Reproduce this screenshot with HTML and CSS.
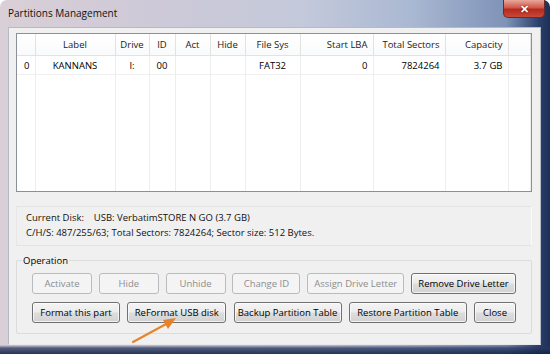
FILE: index.html
```html
<!DOCTYPE html>
<html>
<head>
<meta charset="utf-8">
<link rel="stylesheet" href="styles.css">
</head>
<body>
<div class="window">
  <div class="titlebar">
    <span class="title">Partitions Management</span>
    <span class="closebtn">✕</span>
  </div>
  <div class="frame">
    <div class="client">
      <div class="listview">
        <table class="grid">
          <colgroup>
            <col style="width:18px"><col style="width:80px"><col style="width:34px"><col style="width:26px"><col style="width:35px"><col style="width:35px"><col style="width:55px"><col style="width:73px"><col style="width:72px"><col style="width:63px"><col>
          </colgroup>
          <tr class="head">
            <th></th><th>Label</th><th>Drive</th><th>ID</th><th>Act</th><th>Hide</th><th>File Sys</th><th class="r">Start LBA</th><th class="r">Total Sectors</th><th class="r">Capacity</th><th></th>
          </tr>
          <tr class="row">
            <td class="l">0</td><td>KANNANS</td><td>I:</td><td>00</td><td></td><td></td><td>FAT32</td><td class="r">0</td><td class="r">7824264</td><td class="r">3.7 GB</td><td></td>
          </tr>
          <tr class="fill">
            <td></td><td></td><td></td><td></td><td></td><td></td><td></td><td></td><td></td><td></td><td></td>
          </tr>
        </table>
      </div>
      <div class="info">
        <div>Current Disk:&nbsp;&nbsp;&nbsp; USB: VerbatimSTORE N GO (3.7 GB)</div>
        <div>C/H/S: 487/255/63; Total Sectors: 7824264; Sector size: 512 Bytes.</div>
      </div>
      <div class="group">
        <div class="legend">Operation</div>
        <div class="btnrow">
          <button class="btn dis w60">Activate</button>
          <button class="btn dis w60">Hide</button>
          <button class="btn dis w60">Unhide</button>
          <button class="btn dis w68">Change ID</button>
          <button class="btn dis w97">Assign Drive Letter</button>
          <button class="btn w105">Remove Drive Letter</button>
        </div>
        <div class="btnrow">
          <button class="btn w88">Format this part</button>
          <button class="btn w99">ReFormat USB disk</button>
          <button class="btn w108">Backup Partition Table</button>
          <button class="btn w118">Restore Partition Table</button>
          <button class="btn w42">Close</button>
        </div>
      </div>
    </div>
  </div>
  <svg class="arrow" width="60" height="40" viewBox="0 0 60 40">
    <line x1="3" y1="32" x2="38" y2="13" stroke="#e8822a" stroke-width="2" stroke-linecap="round"/>
    <polygon points="46,8 33,10 38,19" fill="#e8822a"/>
  </svg>
</div>
</body>
</html>
```
FILE: styles.css
```css
html, body {
  margin: 0;
  padding: 0;
  width: 550px;
  height: 354px;
  overflow: hidden;
  background: #ffffff;
}
.window {
  position: relative;
  width: 550px;
  height: 354px;
  display: flex;
  flex-direction: column;
  box-sizing: border-box;
  border-radius: 7px 7px 0 0;
  background:
    linear-gradient(to bottom, rgba(0,0,0,0) 345px, rgba(40,55,95,0.75) 348px, rgba(20,35,70,0.9) 354px),
    linear-gradient(to right, #d9cfd6 0%, #cdc9d8 30%, #c4c9db 55%, #a9b8d2 75%, #7f93b8 92%, #2a406b 98%, #1c2f55 100%);
  font-family: "Open Sans", "Liberation Sans", sans-serif;
  font-size: 9.5px;
  color: #000;
}
.titlebar {
  height: 27px;
  flex: none;
  display: flex;
  align-items: flex-start;
  justify-content: space-between;
  box-sizing: border-box;
  padding-left: 8px;
  padding-right: 5px;
}
.title {
  font-size: 10px;
  line-height: 14px;
  margin-top: 6px;
  color: #111;
}
.closebtn {
  width: 42px;
  height: 18px;
  box-sizing: border-box;
  border: 1px solid #6b2a2a;
  border-top: none;
  border-radius: 0 0 5px 5px;
  background: linear-gradient(to bottom, #e8a89a 0%, #d0584a 45%, #b52a1c 55%, #c8483a 100%);
  color: #fff;
  font-size: 11px;
  font-weight: bold;
  line-height: 17px;
  text-align: center;
  text-shadow: 0 0 2px #600;
}
.frame {
  flex: 1;
  display: flex;
  padding: 0 9px 9px 8px;
}
.client {
  flex: 1;
  background: #f0f0f0;
  border: 1px solid #b6b9c6;
  border-bottom-color: #e8e8e8;
  display: flex;
  flex-direction: column;
  padding: 5px 8px 0 7px;
}
.listview {
  height: 159px;
  box-sizing: border-box;
  border: 1px solid #8a9099;
  background: #fff;
}
.grid {
  width: 100%;
  height: 100%;
  border-collapse: collapse;
  table-layout: fixed;
}
.grid th, .grid td {
  padding: 0 3px;
  text-align: center;
  font-weight: normal;
  white-space: nowrap;
  overflow: hidden;
  border-right: 1px solid #ededed;
}
.grid .r { text-align: right; padding-right: 5px; }
.grid .l { text-align: left; padding-left: 7px; }
.head th {
  height: 21px;
  border-bottom: 1px solid #e2e2e2;
  border-right-color: #e2e2e2;
  color: #1a1a1a;
  background: linear-gradient(to bottom, #ffffff, #f9fafb);
}
.row td {
  height: 18px;
  border-bottom: 1px solid #f0f0f0;
}
.fill td { height: auto; }
.info {
  margin-top: 14px;
  height: 40px;
  box-sizing: border-box;
  border: 1px solid #e3e3e3;
  border-right-color: #fafafa;
  border-left-color: #e6e6e6;
  padding: 3px 0 0 9px;
  line-height: 15px;
  color: #111;
}
.group {
  margin-top: 14px;
  margin-bottom: 8px;
  border: 1px solid #dcdcdc;
  border-radius: 2px;
  padding: 0 15px 10px 15px;
  display: flex;
  flex-direction: column;
  gap: 8px;
}
.legend {
  margin-top: -8px;
  margin-left: -10px;
  margin-bottom: -3px;
  padding: 0 1px;
  width: fit-content;
  background: #f0f0f0;
  line-height: 15px;
}
.btnrow {
  display: flex;
  justify-content: space-between;
}
.btn {
  height: 21px;
  padding: 0;
  box-sizing: border-box;
  font-family: inherit;
  font-size: 9.5px;
  color: #000;
  border: 1px solid #707070;
  border-radius: 3px;
  background: linear-gradient(to bottom, #f4f4f4 0%, #ececec 48%, #dddddd 52%, #d2d2d2 100%);
  box-shadow: inset 0 0 0 1px rgba(255,255,255,0.7);
  white-space: nowrap;
}
.btn.dis {
  color: #8d8d8d;
  border-color: #b8bcc0;
  background: #f4f4f4;
  box-shadow: none;
}
.w42 { width: 42px; }
.w60 { width: 60px; }
.w68 { width: 68px; }
.w88 { width: 88px; }
.w97 { width: 97px; }
.w99 { width: 99px; }
.w105 { width: 105px; }
.w108 { width: 108px; }
.w118 { width: 118px; }
.arrow {
  position: absolute;
  left: 130px;
  top: 310px;
}
```
